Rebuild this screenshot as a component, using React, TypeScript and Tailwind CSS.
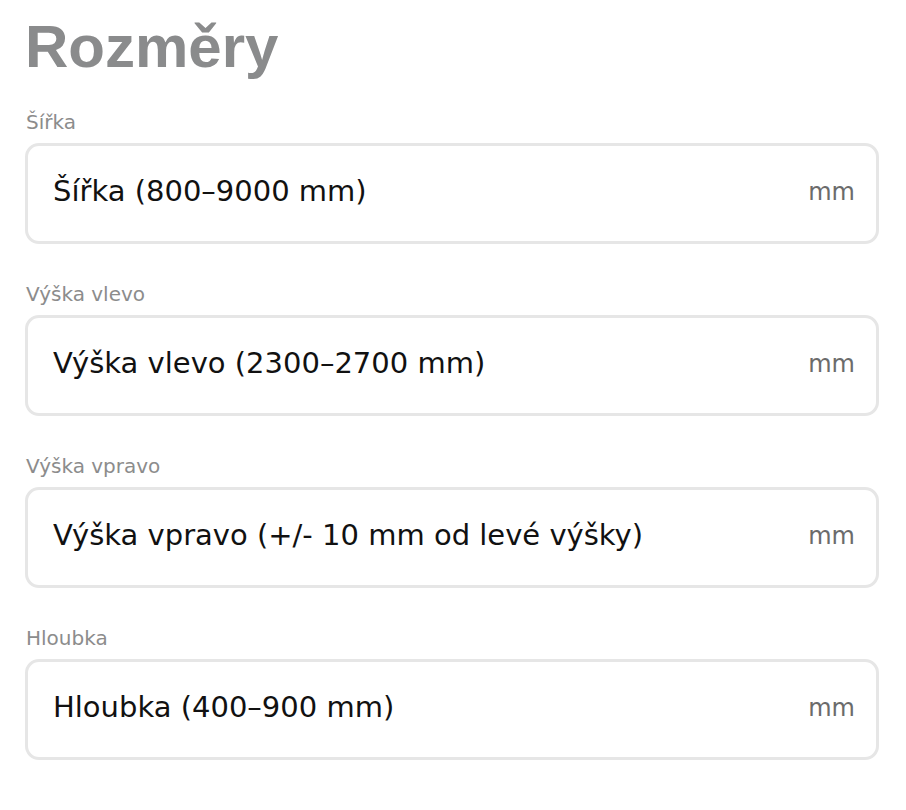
const fields = [
  { label: "Šířka", placeholder: "Šířka (800–9000 mm)" },
  { label: "Výška vlevo", placeholder: "Výška vlevo (2300–2700 mm)" },
  { label: "Výška vpravo", placeholder: "Výška vpravo (+/- 10 mm od levé výšky)" },
  { label: "Hloubka", placeholder: "Hloubka (400–900 mm)" },
];

const App = () => {
  return (
    <main className="min-h-screen bg-white px-[25px] pt-[17px] pr-[27px]">
      <h2 className="font-['Liberation_Sans',Arial,sans-serif] text-[60px] font-black leading-[60px] text-[#8a8b8c]">
        Rozměry
      </h2>

      <div className="mt-[31px] flex flex-col gap-[36px]">
        {fields.map((field) => (
          <label key={field.label} className="block font-['DejaVu_Sans',sans-serif]">
            <span className="mb-[7px] block pl-px text-[20px] leading-[28px] text-[#8c8c8c]">
              {field.label}
            </span>
            <span className="flex h-[101px] items-center rounded-[14px] border-[3px] border-[#e6e6e6] bg-white pl-[25px] pr-[21px] pb-[6px]">
              <input
                type="text"
                placeholder={field.placeholder}
                className="min-w-0 flex-1 bg-transparent text-[29px] leading-[34px] text-[#111] outline-none placeholder:text-[#111]"
              />
              <span className="pt-[2px] text-[24px] leading-[30px] text-[#6b6b6b]">mm</span>
            </span>
          </label>
        ))}
      </div>
    </main>
  );
};

export default App;
